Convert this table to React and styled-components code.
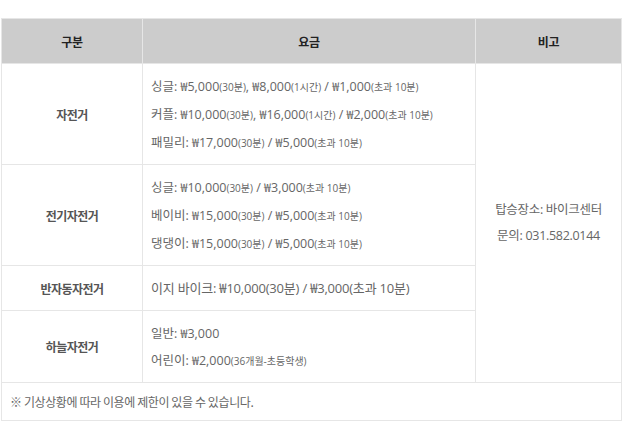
import React from "react";
import styled, { createGlobalStyle } from "styled-components";

const Global = createGlobalStyle`
  html, body { margin: 0; padding: 0; background: #fff; }
  body { font-family: "Noto Sans CJK KR", "Noto Sans", sans-serif; }
`;

const Wrap = styled.div`
  padding: 18px 0 0 1px;
`;

const Table = styled.table`
  width: 620px;
  border-collapse: collapse;
  table-layout: fixed;
  border: 1px solid #e6e6e6;
`;

const Th = styled.th`
  background: #cccccc;
  height: 44px;
  padding: 0;
  font-size: 12px;
  font-weight: 700;
  color: #222;
  border: 1px solid #e6e6e6;
  letter-spacing: -0.3px;
`;

const Label = styled.td`
  text-align: center;
  font-size: 12px;
  font-weight: 700;
  color: #555;
  border: 1px solid #e6e6e6;
  letter-spacing: -0.5px;
`;

const Price = styled.td`
  padding: ${(p) => (p.$big ? "9px 8px" : "9px 8px 7px")};
  border: 1px solid #e6e6e6;
  color: #666;
  font-family: "Open Sans", "Noto Sans CJK KR", sans-serif;
  font-size: ${(p) => (p.$big ? "13px" : "12.5px")};
  letter-spacing: ${(p) => (p.$big ? "-0.2px" : "0")};
`;

const Line = styled.div`
  line-height: ${(p) => (p.$tight ? "26px" : "27px")};
  white-space: nowrap;
`;

const Small = styled.span`
  font-size: 10px;
`;

const Note = styled.td`
  text-align: center;
  vertical-align: middle;
  border: 1px solid #e6e6e6;
  color: #666;
  font-family: "Open Sans", "Noto Sans CJK KR", sans-serif;
  font-size: 12.5px;
  letter-spacing: -0.3px;
`;

const Footer = styled.td`
  padding: 5px 8px;
  line-height: 27px;
  border: 1px solid #e6e6e6;
  color: #666;
  font-size: 12px;
  letter-spacing: -0.4px;
`;

const rows = [
  {
    label: "자전거",
    lines: [
      ["싱글: ₩5,000", "(30분)", ", ₩8,000", "(1시간)", " / ₩1,000", "(초과 10분)"],
      ["커플: ₩10,000", "(30분)", ", ₩16,000", "(1시간)", " / ₩2,000", "(초과 10분)"],
      ["패밀리: ₩17,000", "(30분)", " / ₩5,000", "(초과 10분)"],
    ],
  },
  {
    label: "전기자전거",
    lines: [
      ["싱글: ₩10,000", "(30분)", " / ₩3,000", "(초과 10분)"],
      ["베이비: ₩15,000", "(30분)", " / ₩5,000", "(초과 10분)"],
      ["댕댕이: ₩15,000", "(30분)", " / ₩5,000", "(초과 10분)"],
    ],
  },
  {
    label: "반자동자전거",
    big: true,
    lines: [["이지 바이크: ₩10,000(30분) / ₩3,000(초과 10분)"]],
  },
  {
    label: "하늘자전거",
    lines: [["일반: ₩3,000"], ["어린이: ₩2,000", "(36개월-초등학생)"]],
  },
];

function renderLine(parts) {
  return parts.map((t, i) => (i % 2 === 1 ? <Small key={i}>{t}</Small> : <React.Fragment key={i}>{t}</React.Fragment>));
}

export default function App() {
  return (
    <Wrap>
      <Global />
      <Table>
        <colgroup>
          <col style={{ width: 141 }} />
          <col style={{ width: 333 }} />
          <col style={{ width: 146 }} />
        </colgroup>
        <thead>
          <tr>
            <Th>구분</Th>
            <Th>요금</Th>
            <Th>비고</Th>
          </tr>
        </thead>
        <tbody>
          {rows.map((r, idx) => (
            <tr key={r.label}>
              <Label>{r.label}</Label>
              <Price $big={r.big}>
                {r.lines.map((l, i) => (
                  <Line key={i} $tight={r.big}>{renderLine(l)}</Line>
                ))}
              </Price>
              {idx === 0 && (
                <Note rowSpan={4}>
                  <Line $tight>탑승장소: 바이크센터</Line>
                  <Line $tight>문의: 031.582.0144</Line>
                </Note>
              )}
            </tr>
          ))}
          <tr>
            <Footer colSpan={3}>※ 기상상황에 따라 이용에 제한이 있을 수 있습니다.</Footer>
          </tr>
        </tbody>
      </Table>
    </Wrap>
  );
}
